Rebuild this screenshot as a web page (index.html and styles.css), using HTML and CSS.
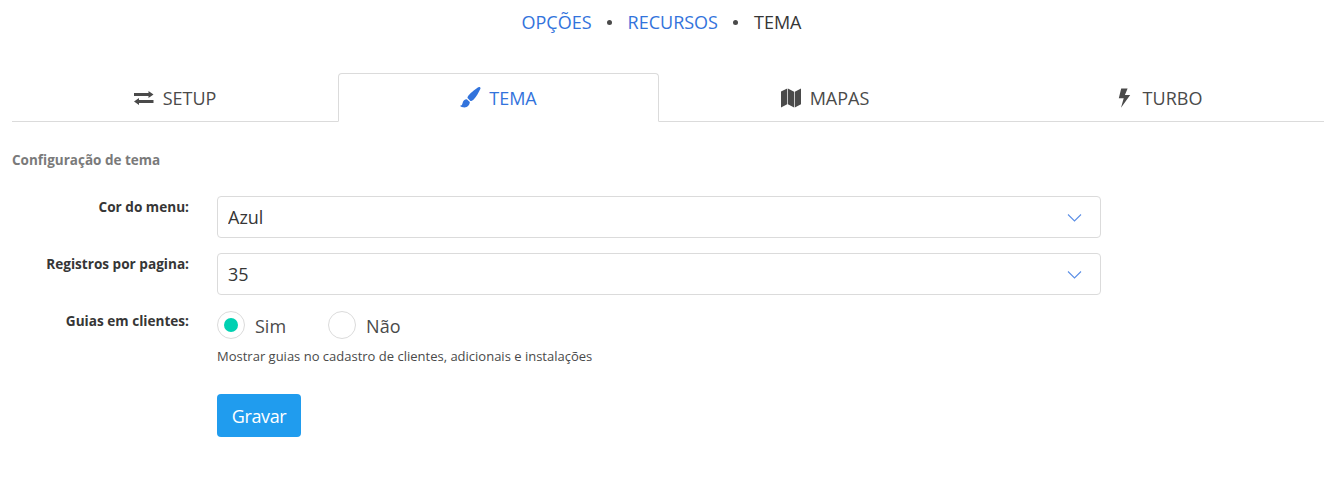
FILE: index.html
```html
<!DOCTYPE html>
<html lang="pt-BR">
<head>
<meta charset="UTF-8">
<meta name="viewport" content="width=device-width, initial-scale=1.0">
<title>Tema</title>
<link rel="stylesheet" href="styles.css">
</head>
<body>
<nav class="breadcrumb">
    <a href="#">OPÇÕES</a>
    <span class="dot"></span>
    <a href="#">RECURSOS</a>
    <span class="dot"></span>
    <span class="current">TEMA</span>
</nav>

<ul class="tabs">
    <li class="tab">
        <svg class="icon" width="20" height="20" viewBox="0 0 20 20"><path d="M0 5h14.500V3l5 3.500-5 3.500V8H0zM19.500 12H5v-2l-5 3.500L5 17v-2h14.500z"/></svg>
        SETUP
    </li>
    <li class="tab active">
        <svg class="icon icon-brush" width="21" height="21" viewBox="0 0 21 21"><path d="M19 0c1.200-.2 1.800.7 1.400 1.800-1.500 3.500-4.500 8.500-7 11-.9.9-2 1.200-3 1.200L7.500 11c0-1 .5-2.200 1.400-3.100C11.400 5.400 16 1.300 19 0zM6.800 12.300l3 2.800c0 3-2.400 5.400-5.300 5.400-2 0-3.700-.6-4.500-1.700 1.700-.2 2.300-1.100 2.600-2.700.4-2.200 2.100-3.700 4.200-3.800z"/></svg>
        TEMA
    </li>
    <li class="tab">
        <svg class="icon" width="20" height="20" viewBox="0 0 20 20"><path d="M0 3.500 6.200.5v15.800L0 19.500zM6.900.5l6.200 3.200v15.800l-6.200-3.200zM13.800 3.700 20 .5v15.800l-6.200 3.200z"/></svg>
        MAPAS
    </li>
    <li class="tab">
        <svg class="icon icon-bolt" width="13" height="20" viewBox="0 0 13 20"><path d="M3.200.500h6.400L6.900 7h5.300L3 19.800l2.700-9.600H.8z"/></svg>
        TURBO
    </li>
</ul>

<h2 class="section-title">Configuração de tema</h2>

<form class="form">
    <div class="field">
        <label class="field-label" for="menuColor">Cor do menu:</label>
        <div class="select-box">
            <select id="menuColor"><option>Azul</option></select>
            <svg class="chevron" width="15" height="10" viewBox="0 0 15 10"><path d="M1 1.500 7.500 8 14 1.500"/></svg>
        </div>
    </div>
    <div class="field">
        <label class="field-label" for="perPage">Registros por pagina:</label>
        <div class="select-box">
            <select id="perPage"><option>35</option></select>
            <svg class="chevron" width="15" height="10" viewBox="0 0 15 10"><path d="M1 1.500 7.500 8 14 1.500"/></svg>
        </div>
    </div>
    <div class="field field-radio">
        <span class="field-label">Guias em clientes:</span>
        <div class="field-body">
            <div class="radios">
                <label class="radio"><input type="radio" name="guias" checked><span class="mark"></span>Sim</label>
                <label class="radio"><input type="radio" name="guias"><span class="mark"></span>Não</label>
            </div>
            <p class="help">Mostrar guias no cadastro de clientes, adicionais e instalações</p>
        </div>
    </div>
    <div class="actions">
        <button type="button" class="button">Gravar</button>
    </div>
</form>
</body>
</html>
```

FILE: styles.css
```css
body {
    font-family: "Open Sans", "Noto Sans", sans-serif;
    margin: 0;
    padding: 0 10px 0 12px;
    background-color: #fff;
    color: #4a4a4a;
}
a {
    color: #3273dc;
    text-decoration: none;
}
.breadcrumb {
    display: flex;
    justify-content: center;
    align-items: center;
    height: 44px;
    padding-right: 13px;
    gap: 15.500px;
    font-size: 18px;
}
.breadcrumb .current {
    color: #363636;
}
.dot {
    width: 5px;
    height: 5px;
    border-radius: 50%;
    background-color: #4a4a4a;
}
.tabs {
    display: flex;
    list-style: none;
    margin: 29px 0 0;
    padding: 0;
    height: 49px;
    border-bottom: 1px solid #dbdbdb;
    box-sizing: border-box;
}
.tab {
    flex: 1 1 0;
    display: flex;
    align-items: center;
    justify-content: center;
    gap: 9px;
    font-size: 18px;
    line-height: 26px;
    color: #4a4a4a;
    box-sizing: border-box;
    height: 49px;
}
.tab:nth-child(1) { flex-basis: 326px; flex-grow: 0; }
.tab:nth-child(2) { flex-basis: 321px; flex-grow: 0; }
.tab:nth-child(3) { flex-basis: 332px; flex-grow: 0; }
.tab:last-child { padding-left: 5px; }
.tab.active {
    color: #3273dc;
    background-color: #fff;
    border: 1px solid #dbdbdb;
    border-bottom-color: #fff;
    border-radius: 4px 4px 0 0;
}
.icon {
    fill: currentColor;
    flex: none;
}
.icon-brush {
    margin-right: -1px;
}
.icon-bolt {
    margin-right: 3px;
}
.section-title {
    margin: 30px 0 0;
    font-size: 13.500px;
    line-height: 17px;
    font-weight: 700;
    color: #7a7a7a;
}
.form {
    margin-top: 27px;
}
.field {
    display: flex;
    margin-bottom: 15px;
}
.field-label {
    width: 177px;
    margin-right: 28px;
    padding-top: 2px;
    text-align: right;
    font-size: 13.600px;
    line-height: 18px;
    font-weight: 700;
    color: #363636;
    flex: none;
}
.select-box {
    position: relative;
    width: 884px;
    height: 42px;
}
.chevron {
    position: absolute;
    top: 17px;
    right: 19px;
    fill: none;
    stroke: #5c8fe6;
    stroke-width: 1.100;
    pointer-events: none;
}
.select-box select {
    appearance: none;
    width: 100%;
    height: 100%;
    padding: 0 10px;
    background-color: #fff;
    border: 1px solid #dbdbdb;
    border-radius: 4px;
    font-family: inherit;
    font-size: 18px;
    color: #363636;
}
.field-radio {
    margin-bottom: 0;
}
.radios {
    display: flex;
    gap: 42px;
    height: 32px;
}
.radio {
    display: flex;
    align-items: center;
    height: 32px;
    font-size: 18px;
    color: #4a4a4a;
}
.radio input {
    position: absolute;
    opacity: 0;
}
.mark {
    position: relative;
    box-sizing: border-box;
    width: 28px;
    height: 28px;
    margin: -2px 10px 0 0;
    border: 1px solid #dbdbdb;
    border-radius: 50%;
}
.radio input:checked + .mark::after {
    content: "";
    position: absolute;
    top: 6px;
    left: 6px;
    width: 14px;
    height: 14px;
    border-radius: 50%;
    background-color: #00d1b2;
}
.help {
    margin: 6px 0 0;
    font-size: 13px;
    line-height: 17px;
    color: #4a4a4a;
}
.actions {
    margin: 29px 0 0 205px;
}
.button {
    width: 84px;
    height: 43px;
    background-color: #209cee;
    color: #fff;
    border: none;
    border-radius: 4px;
    font-family: inherit;
    font-size: 18px;
    letter-spacing: -0.4px;
    cursor: pointer;
}
```
